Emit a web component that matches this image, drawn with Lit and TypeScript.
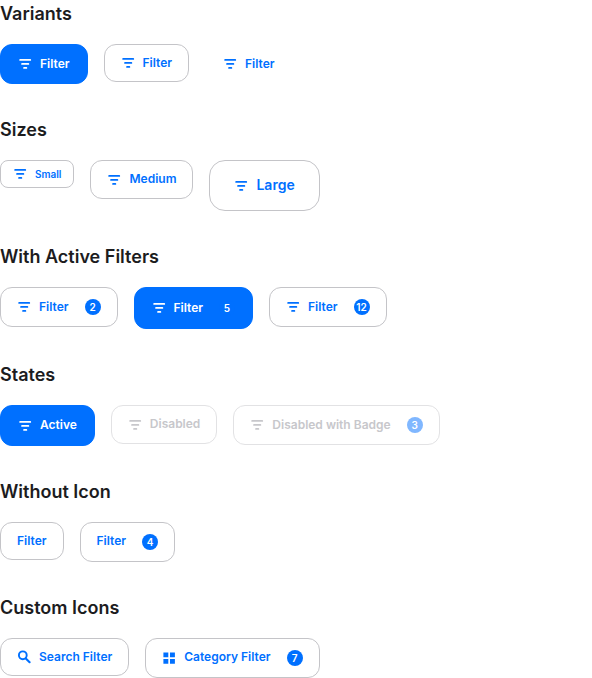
import { LitElement, html, css, svg, nothing } from "lit";
import { customElement, property } from "lit/decorators.js";
import { classMap } from "lit/directives/class-map.js";
import { styleMap } from "lit/directives/style-map.js";

type Variant = "filled" | "outline" | "ghost";
type Size = "small" | "medium" | "large";

interface Item {
  label: string;
  height: number;
  variant?: Variant;
  size?: Size;
  icon?: string;
  badge?: string;
  disabled?: boolean;
  raised?: boolean;
}

const icons: Record<string, unknown> = {
  filter: svg`<path d="M2.1 2.9h10.2M4 6.9h6.4M6 10.9h2.4" fill="none" stroke="currentColor" stroke-width="1.7" stroke-linecap="round"/>`,
  search: svg`<circle cx="5.8" cy="5.3" r="3.9" fill="none" stroke="currentColor" stroke-width="1.9"/><path d="M8.8 8.4l3.8 3.8" fill="none" stroke="currentColor" stroke-width="2.1" stroke-linecap="round"/>`,
  grid: svg`<rect x="1.4" y="1.4" width="4.9" height="4.8" rx=".2"/><rect x="8" y="1.4" width="4.9" height="4.8" rx=".2"/><rect x="1.4" y="7.9" width="4.9" height="4.8" rx=".2"/><rect x="8" y="7.9" width="4.9" height="4.8" rx=".2"/>`,
};

const sections: { title: string; items: Item[] }[] = [
  {
    title: "Variants",
    items: [
      { label: "Filter", variant: "filled", height: 40 },
      { label: "Filter", height: 38 },
      { label: "Filter", variant: "ghost", height: 40 },
    ],
  },
  {
    title: "Sizes",
    items: [
      { label: "Small", size: "small", height: 28 },
      { label: "Medium", height: 39 },
      { label: "Large", size: "large", height: 51 },
    ],
  },
  {
    title: "With Active Filters",
    items: [
      { label: "Filter", badge: "2", height: 40 },
      { label: "Filter", variant: "filled", badge: "5", height: 42 },
      { label: "Filter", badge: "12", height: 40 },
    ],
  },
  {
    title: "States",
    items: [
      { label: "Active", variant: "filled", height: 41 },
      { label: "Disabled", disabled: true, height: 39 },
      { label: "Disabled with Badge", disabled: true, badge: "3", height: 40 },
    ],
  },
  {
    title: "Without Icon",
    items: [
      { label: "Filter", icon: "", height: 38 },
      { label: "Filter", icon: "", badge: "4", height: 40, raised: true },
    ],
  },
  {
    title: "Custom Icons",
    items: [
      { label: "Search Filter", icon: "search", height: 38 },
      { label: "Category Filter", icon: "grid", badge: "7", height: 40, raised: true },
    ],
  },
];

@customElement("filter-button")
export class FilterButton extends LitElement {
  @property({ attribute: false }) item!: Item;

  static styles = css`
    :host { display: block; flex: none; }
    .button {
      display: flex;
      align-items: center;
      box-sizing: border-box;
      height: 100%;
      margin: 0;
      padding: 0 16px;
      border: 1px solid #c4c4c8;
      border-radius: 12px;
      background: #fff;
      color: #0070ff;
      font: 600 12px/18px Inter, sans-serif;
      white-space: nowrap;
    }
    .filled { background: #0070ff; border-color: #0070ff; color: #fff; padding: 0 17px; }
    .ghost { border-color: transparent; background: transparent; padding: 0 17px; }
    .small { font-size: 10px; padding: 0 12px; border-radius: 8px; }
    .large { font-size: 14px; padding: 0 24px; border-radius: 16px; }
    .disabled { color: #c7c7cb; border-color: #e2e2e4; }
    .icon { width: 14px; height: 14px; margin-right: 8px; fill: currentColor; flex: none; }
    .label { margin-bottom: 1px; }
    .raised .label { margin-bottom: 2px; }
    .badge {
      display: flex;
      align-items: center;
      justify-content: center;
      width: 16px;
      height: 16px;
      margin-left: 16px;
      border-radius: 8px;
      background: #0070ff;
      color: #fff;
      font-size: 10px;
      line-height: 16px;
    }
    .disabled .badge { background: #80b7ff; }
  `;

  render() {
    const {
      label,
      variant = "outline",
      size = "medium",
      icon = "filter",
      badge,
      disabled = false,
      raised = false,
    } = this.item;
    return html`<button
      class=${classMap({ button: true, [variant]: true, [size]: true, disabled, raised })}
      ?disabled=${disabled}
    >${icon ? html`<svg class="icon" viewBox="0 0 14 14">${icons[icon]}</svg>` : nothing}<span class="label">${label}</span>${badge ? html`<span class="badge">${badge}</span>` : nothing}</button>`;
  }
}

@customElement("app-root")
export class AppRoot extends LitElement {
  static styles = css`
    :host { display: block; height: 678px; overflow: hidden; background: #fff; }
    .title {
      margin: 0 0 16px;
      height: 28px;
      color: #1c1c1e;
      font: 600 18px/28px Inter, sans-serif;
    }
    .row { display: flex; align-items: flex-start; gap: 16px; margin-bottom: 32px; }
  `;

  render() {
    return sections.map(
      (section) => html`<section>
        <h3 class="title">${section.title}</h3>
        <div class="row">
          ${section.items.map(
            (item) => html`<filter-button
              .item=${item}
              style=${styleMap({ height: `${item.height}px` })}
            ></filter-button>`,
          )}
        </div>
      </section>`,
    );
  }
}
